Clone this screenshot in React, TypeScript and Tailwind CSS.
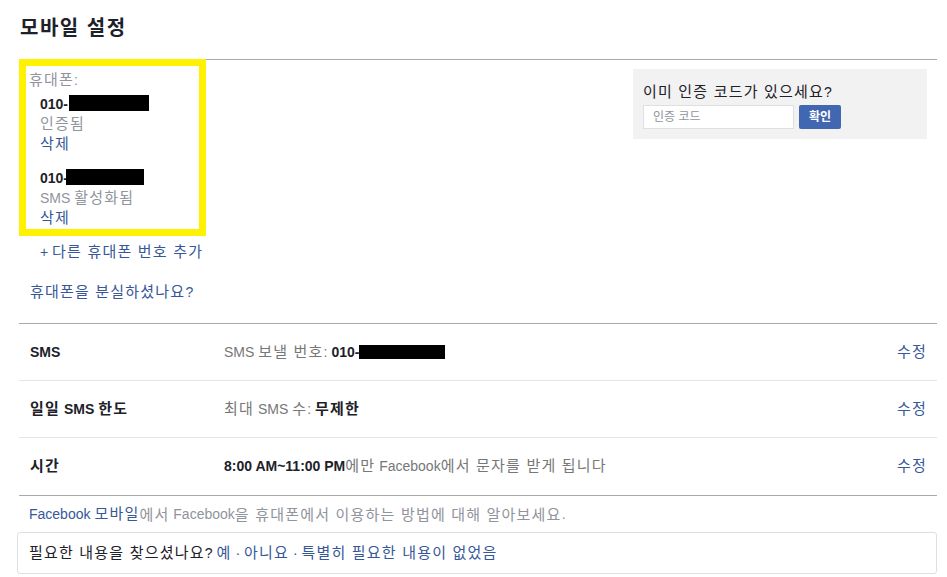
import React from "react"

const font = { fontFamily: '"Liberation Sans", "Noto Sans CJK KR", sans-serif' }

// hangul falls back to a narrower face here, so widen it a little
const K = ({ children }: { children: React.ReactNode }) => (
  <span className="text-[15px] leading-none tracking-[1.2px]">{children}</span>
)

const Redacted = ({ width, height, shift }: { width: number; height: number; shift: number }) => (
  <span
    className="inline-block bg-black align-[-2px]"
    style={{ width, height, marginLeft: -shift }}
  />
)

const PhoneEntry = ({ status, redactWidth, shift }: { status: React.ReactNode; redactWidth: number; shift: number }) => (
  <div className="pl-[11px]">
    <div className="h-5 leading-5 font-bold text-[#1d2129]">
      010-
      <Redacted width={redactWidth} height={16} shift={shift} />
    </div>
    <div className="h-5 leading-5 text-[#90949c]">{status}</div>
    <div className="h-5 leading-5 text-[#365899]">
      <K>삭제</K>
    </div>
  </div>
)

const SettingRow = ({ label, children }: { label: React.ReactNode; children: React.ReactNode }) => (
  <div className="flex h-[57px] items-center border-b border-[#e5e5e5] last:border-b-0 pl-[11px] pr-[10px]">
    <div className="w-[194px] font-bold text-[#1d2129]">{label}</div>
    <div className="flex-1 text-[#777]">{children}</div>
    <div className="text-[#365899]">
      <K>수정</K>
    </div>
  </div>
)

export default function App() {
  return (
    <div className="w-[947px] h-[577px] bg-white text-[14px] overflow-hidden" style={font}>
      <div className="mx-[19px] w-[918px]">
        {/* header */}
        <div className="h-[60px] border-b border-[#aaa] pl-px pt-[16px]">
          <h1 className="text-[20px] font-bold leading-6 tracking-[1.5px] text-[#1d2129]">모바일 설정</h1>
        </div>

        {/* phones */}
        <div className="flex h-[263px] items-start">
          <div className="-mt-px w-[187px]">
            <div className="h-[177px] border-[7px] border-[#fff200] bg-white pl-[3px] pt-1">
              <div className="h-5 leading-5 text-[#90949c]">
                <K>휴대폰</K>:
              </div>
              <div className="pt-1">
                <PhoneEntry status={<K>인증됨</K>} redactWidth={80} shift={-1} />
              </div>
              <div className="pt-[14px]">
                <PhoneEntry
                  status={
                    <>
                      SMS <K>활성화됨</K>
                    </>
                  }
                  redactWidth={78}
                  shift={2}
                />
              </div>
            </div>
            <div className="mt-[6px] h-5 pl-[21px] leading-5 text-[#365899]">
              + <K>다른 휴대폰 번호 추가</K>
            </div>
            <div className="mt-5 h-5 pl-[11px] leading-5 text-[#365899]">
              <K>휴대폰을 분실하셨나요</K>?
            </div>
          </div>
          <div className="flex-1" />
          <div className="mr-[10px] mt-[9px] h-[70px] w-[294px] bg-[#f2f2f2] pl-[10px] pt-[13px]">
            <div className="h-5 leading-5 text-[#1d2129]">
              <K>이미 인증 코드가 있으세요</K>?
            </div>
            <div className="mt-[3px] flex items-center gap-[5px]">
              <div className="flex h-[24px] w-[151px] items-center border border-[#dddfe2] bg-white pl-[9px] text-[12px] text-[#90949c]">
                인증 코드
              </div>
              <div className="flex h-[24px] w-[42px] items-center justify-center rounded-[2px] bg-[#4267b2] text-[12px] font-bold text-white">
                확인
              </div>
            </div>
          </div>
        </div>

        {/* settings rows */}
        <div className="border-t border-b border-[#aaa]">
          <SettingRow label="SMS">
            SMS <K>보낼 번호</K>: <span className="font-bold text-[#1d2129]">010-</span>
            <Redacted width={86} height={14} shift={0} />
          </SettingRow>
          <SettingRow
            label={
              <>
                <K>일일</K> SMS <K>한도</K>
              </>
            }
          >
            <K>최대</K> SMS <K>수</K>:{" "}
            <span className="font-bold text-[#1d2129]">
              <K>무제한</K>
            </span>
          </SettingRow>
          <SettingRow label={<K>시간</K>}>
            <span className="font-bold text-[#1d2129]">8:00 AM~11:00 PM</span>
            <K>에만</K> Facebook<K>에서 문자를 받게 됩니다</K>
          </SettingRow>
        </div>

        {/* footer */}
        <div className="flex h-[36px] items-center pl-[10px] text-[#90949c]">
          <span className="text-[#365899]">
            Facebook <K>모바일</K>
          </span>
          <K>에서</K>&nbsp;Facebook<K>을 휴대폰에서 이용하는 방법에 대해 알아보세요</K>.
        </div>
        <div className="-ml-[2px] flex h-[42px] items-center whitespace-pre rounded-[3px] border border-[#dddfe2] pl-[11px]">
          <span className="text-[#1d2129]">
            <K>필요한 내용을 찾으셨나요</K>?
          </span>
          <span className="ml-1 text-[#365899]">
            <K>예</K> · <K>아니요</K> · <K>특별히 필요한 내용이 없었음</K>
          </span>
        </div>
      </div>
    </div>
  )
}
